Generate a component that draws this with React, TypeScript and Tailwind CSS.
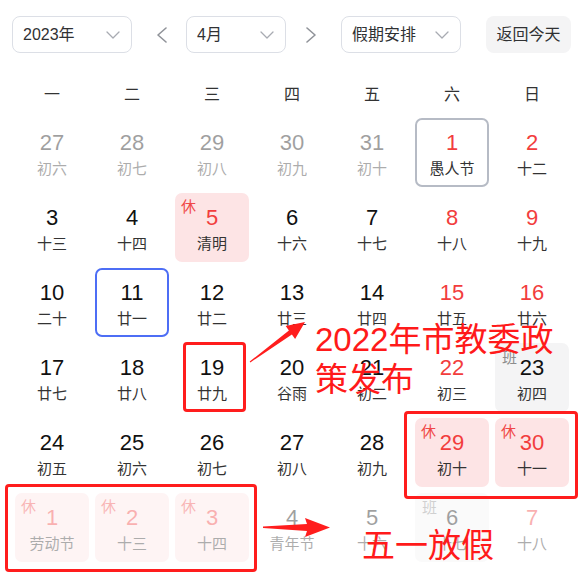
import React from "react";

// 2023年4月 日历视图 + 红色标注
type Day = {
  d: number;
  lunar: string;
  other?: boolean; // 非本月
  red?: boolean; // 周末/节假日红字
  rest?: boolean; // 休
  work?: boolean; // 班
  today?: boolean;
  selected?: boolean;
};

const weekdays = ["一", "二", "三", "四", "五", "六", "日"];

const days: Day[] = [
  { d: 27, lunar: "初六", other: true },
  { d: 28, lunar: "初七", other: true },
  { d: 29, lunar: "初八", other: true },
  { d: 30, lunar: "初九", other: true },
  { d: 31, lunar: "初十", other: true },
  { d: 1, lunar: "愚人节", red: true, selected: true },
  { d: 2, lunar: "十二", red: true },

  { d: 3, lunar: "十三" },
  { d: 4, lunar: "十四" },
  { d: 5, lunar: "清明", red: true, rest: true },
  { d: 6, lunar: "十六" },
  { d: 7, lunar: "十七" },
  { d: 8, lunar: "十八", red: true },
  { d: 9, lunar: "十九", red: true },

  { d: 10, lunar: "二十" },
  { d: 11, lunar: "廿一", today: true },
  { d: 12, lunar: "廿二" },
  { d: 13, lunar: "廿三" },
  { d: 14, lunar: "廿四" },
  { d: 15, lunar: "廿五", red: true },
  { d: 16, lunar: "廿六", red: true },

  { d: 17, lunar: "廿七" },
  { d: 18, lunar: "廿八" },
  { d: 19, lunar: "廿九" },
  { d: 20, lunar: "谷雨" },
  { d: 21, lunar: "初二" },
  { d: 22, lunar: "初三", red: true },
  { d: 23, lunar: "初四", work: true },

  { d: 24, lunar: "初五" },
  { d: 25, lunar: "初六" },
  { d: 26, lunar: "初七" },
  { d: 27, lunar: "初八" },
  { d: 28, lunar: "初九" },
  { d: 29, lunar: "初十", red: true, rest: true },
  { d: 30, lunar: "十一", red: true, rest: true },

  { d: 1, lunar: "劳动节", red: true, rest: true, other: true },
  { d: 2, lunar: "十三", red: true, rest: true, other: true },
  { d: 3, lunar: "十四", red: true, rest: true, other: true },
  { d: 4, lunar: "青年节", other: true },
  { d: 5, lunar: "十六", other: true },
  { d: 6, lunar: "十七", work: true, other: true },
  { d: 7, lunar: "十八", red: true, other: true },
];

function ChevronDown() {
  return (
    <svg width="14" height="8" viewBox="0 0 14 8" fill="none">
      <polyline points="1,1 7,7 13,1" stroke="#a8abb2" strokeWidth="1.3" strokeLinecap="round" strokeLinejoin="round" />
    </svg>
  );
}

function Arrow({ dir }: { dir: "left" | "right" }) {
  return (
    <svg width="11" height="16" viewBox="0 0 11 16" fill="none">
      <polyline
        points={dir === "left" ? "10,1 2,8 10,15" : "1,1 9,8 1,15"}
        stroke="#909399"
        strokeWidth="1.6"
        strokeLinecap="round"
        strokeLinejoin="round"
      />
    </svg>
  );
}

function Select({ label, width }: { label: string; width: string }) {
  return (
    <div
      className={`${width} h-full flex items-center justify-between pl-[10px] pr-[11px] border border-[#dcdfe6] rounded-[8px] text-[16px] text-[#303133]`}
    >
      <span>{label}</span>
      <ChevronDown />
    </div>
  );
}

function Cell({ day }: { day: Day }) {
  let box = "border-2 border-transparent";
  if (day.rest) box = "border-2 border-transparent bg-[#fde4e5]";
  if (day.work) box = "border-2 border-transparent bg-[#f4f4f5]";
  if (day.today) box = "border-2 border-[#4d6ef5]";
  if (day.selected) box = "border-2 border-[#b6bbc5]";

  return (
    <div className={`h-[75px] p-[3px] ${day.other ? "opacity-40" : ""}`}>
      <div className={`relative h-full rounded-[7px] flex flex-col items-center pt-[11px] ${box}`}>
        {day.rest && (
          <span className="absolute left-[4px] top-[3px] text-[15px] leading-[18px] text-[#f04848]">休</span>
        )}
        {day.work && (
          <span className="absolute left-[5px] top-[4px] text-[15px] leading-[18px] text-[#8c8c8c]">班</span>
        )}
        <span className={`text-[22px] leading-[24px] ${day.red ? "text-[#f23d3d]" : "text-[#111]"}`}>
          {day.d}
        </span>
        <span className="mt-[4px] text-[15px] leading-[20px] text-[#333]">{day.lunar}</span>
      </div>
    </div>
  );
}

export default function App() {
  return (
    <div className="relative w-[587px] h-[577px] overflow-hidden bg-white font-['Liberation_Sans','Noto_Sans_CJK_SC',sans-serif]">
      {/* 顶部工具栏 */}
      <div className="pt-[16px] pl-[12px]">
        <div className="flex items-center h-[37px]">
          <Select label="2023年" width="w-[120px]" />
          <div className="ml-[24px] flex items-center">
            <Arrow dir="left" />
          </div>
          <div className="ml-[19px] h-full">
            <Select label="4月" width="w-[100px]" />
          </div>
          <div className="ml-[20px] flex items-center">
            <Arrow dir="right" />
          </div>
          <div className="ml-[24px] h-full">
            <Select label="假期安排" width="w-[120px]" />
          </div>
          <button className="ml-[25px] h-full w-[85px] rounded-[8px] bg-[#f4f4f5] text-[16px] text-[#303133]">
            返回今天
          </button>
        </div>
      </div>

      {/* 星期表头 */}
      <div className="ml-[12px] w-[560px] grid grid-cols-7 h-[62px] pt-[32px]">
        {weekdays.map((w) => (
          <div key={w} className="text-center text-[16px] leading-[20px] text-[#333]">
            {w}
          </div>
        ))}
      </div>

      {/* 日期格子 */}
      <div className="ml-[12px] w-[560px] grid grid-cols-7">
        {days.map((day, i) => (
          <Cell key={i} day={day} />
        ))}
      </div>

      {/* 红色标注 */}
      <div className="absolute left-[183px] top-[342px] w-[63px] h-[70px] border-[3px] border-[#ff1d1d] rounded-[4px]" />
      <div className="absolute left-[404px] top-[411px] w-[174px] h-[88px] border-[3px] border-[#ff1d1d] rounded-[4px]" />
      <div className="absolute left-[5px] top-[484px] w-[252px] h-[88px] border-[3px] border-[#ff1d1d] rounded-[4px]" />

      <svg className="absolute left-0 top-0" width="587" height="577" viewBox="0 0 587 577">
        <polygon
          points="250.3,362.4 291.9,334.6 295.1,339.1 305,322 285.7,326.1 288.9,330.6 249.7,361.6"
          fill="#ff1d1d"
        />
        <polygon points="263,526.5 307,524 305,518 330,527.5 305,537 307,531 263,528" fill="#ff1d1d" />
      </svg>

      <div className="absolute left-[315px] top-[320px] text-[33px] leading-[40px] text-[#ff1a1a] whitespace-nowrap">
        2022年市教委政
        <br />
        策发布
      </div>
      <div className="absolute left-[362px] top-[526px] text-[33px] leading-[40px] text-[#ff1a1a] whitespace-nowrap">
        五一放假
      </div>
    </div>
  );
}
